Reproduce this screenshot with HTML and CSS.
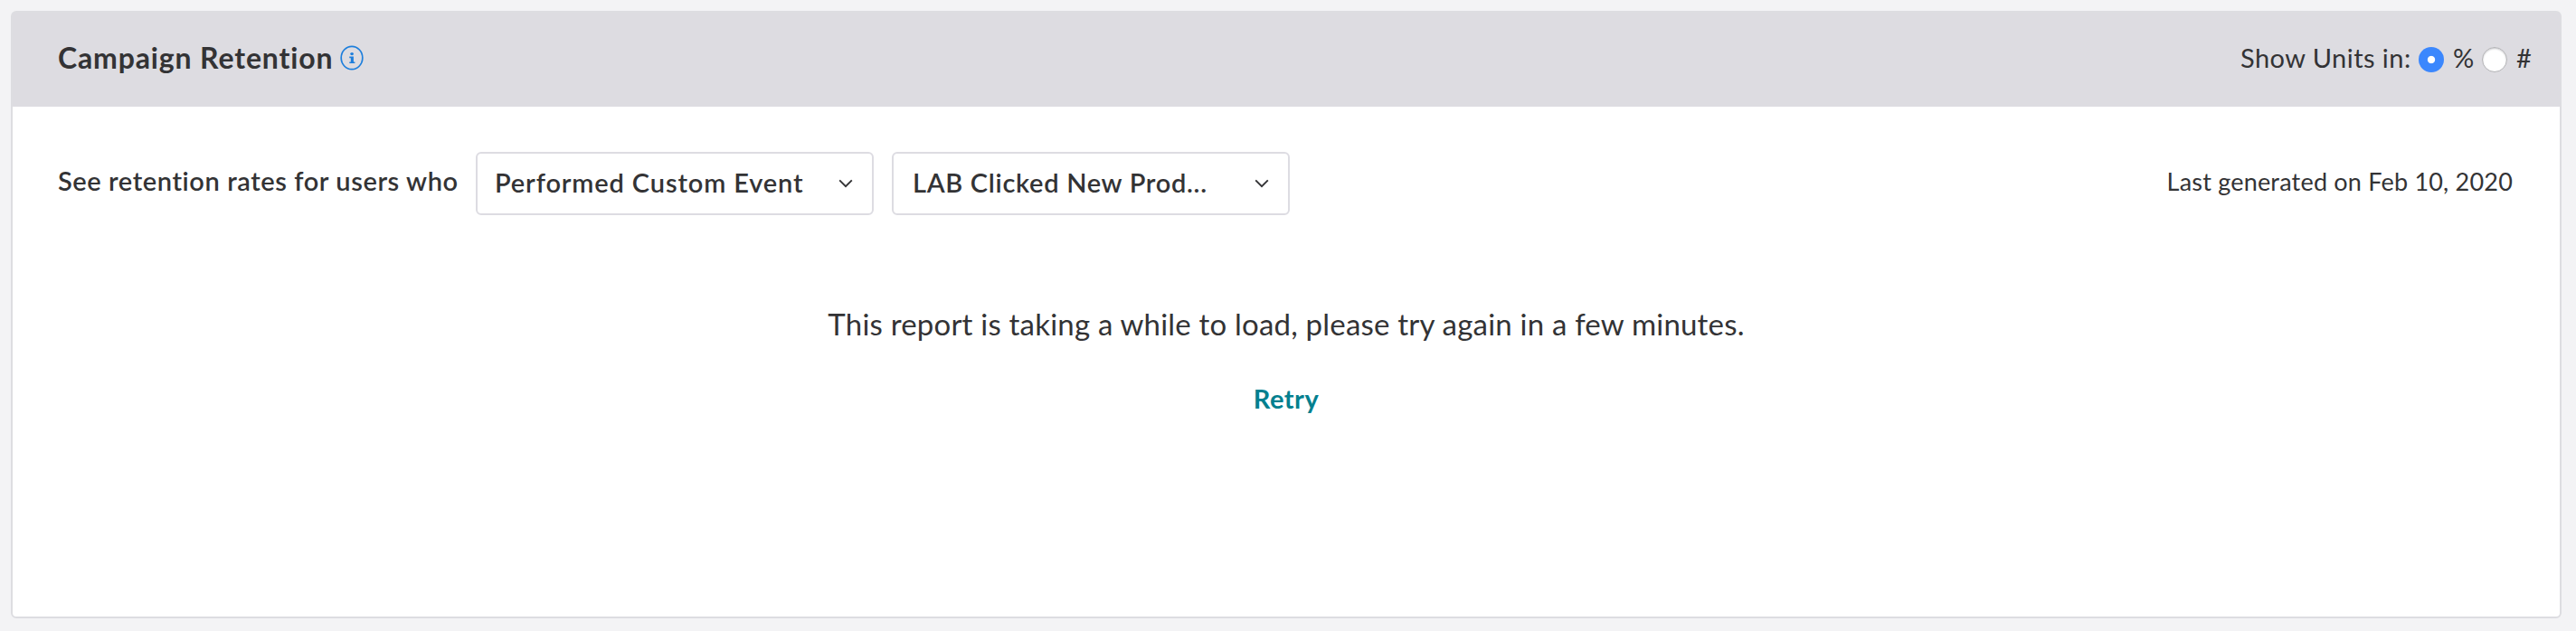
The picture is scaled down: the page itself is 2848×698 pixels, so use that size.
FILE: index.html
```html
<!DOCTYPE html>
<html lang="en">
<head>
<meta charset="utf-8">
<title>Campaign Retention</title>
<link rel="stylesheet" href="styles.css">
</head>
<body>
<section class="card">
  <header class="card-header">
    <h2 class="title">Campaign Retention</h2>
    <svg class="info" viewBox="0 0 26 28"><ellipse cx="13" cy="14" rx="11.8" ry="12.7" fill="none" stroke="#1e7fdc" stroke-width="1.7"/><ellipse cx="13.1" cy="9.6" rx="1.9" ry="1.6" fill="#1e7fdc"/><path d="M10.3 12.6h4.6v5.8h1.5v1.6h-6.1v-1.6h1.5v-4.2h-1.5z" fill="#1e7fdc"/></svg>
    <div class="units">
      <span class="units-label">Show Units in:</span>
      <span class="radio radio-on"></span>
      <span class="percent">%</span>
      <span class="radio"></span>
      <span class="hash">#</span>
    </div>
  </header>
  <div class="filters">
    <span class="lead">See retention rates for users who</span>
    <div class="select">
      <span class="select-text event-type">Performed Custom Event</span>
      <svg class="chevron" viewBox="0 0 16 10"><path d="M1.2 1.3 8 8.2l6.8-6.9" fill="none" stroke="#333335" stroke-width="1.9"/></svg>
    </div>
    <div class="select select-wide">
      <span class="select-text event-name">LAB Clicked New Prod...</span>
      <svg class="chevron" viewBox="0 0 16 10"><path d="M1.2 1.3 8 8.2l6.8-6.9" fill="none" stroke="#333335" stroke-width="1.9"/></svg>
    </div>
    <span class="generated">Last generated on Feb 10, 2020</span>
  </div>
  <div class="message">
    <p class="message-text">This report is taking a while to load, please try again in a few minutes.</p>
    <a class="retry">Retry</a>
  </div>
</section>
</body>
</html>
```
FILE: styles.css
```css
* { box-sizing: border-box; }
body {
  margin: 0;
  height: 698px;
  padding: 12px 16px 14px 12px;
  background: #f3f3f5;
  color: #333335;
  font-family: Lato, "Liberation Sans", sans-serif;
  white-space: nowrap;
  overflow: hidden;
}
.card {
  height: 672px;
  border: 2px solid #dddde1;
  border-radius: 6px;
  background: #fff;
}
.card-header {
  height: 104px;
  padding: 0 30px 0 50px;
  display: flex;
  align-items: center;
  background: #dddce1;
}
.title {
  margin: -4px 0 0;
  width: 305px;
  font-size: 32px;
  line-height: 40px;
  font-weight: 700;
  letter-spacing: 0.85px;
}
.info { width: 26px; height: 28px; margin: -4px 0 0 7px; }
.units {
  margin-left: auto;
  display: flex;
  align-items: center;
  font-size: 29px;
  line-height: 36px;
}
.units-label { width: 197px; letter-spacing: 0.45px; margin-top: -4px; }
.radio {
  width: 28px;
  height: 28px;
  border: 1px solid #b3b3b6;
  border-radius: 50%;
  background: #fff;
  box-shadow: inset 0 1px 2px #c8c8cb;
}
.radio-on {
  border: 0;
  background: radial-gradient(circle, #fff 3.7px, #3b87fd 4.6px);
  box-shadow: none;
}
.percent { width: 42px; padding-left: 10px; margin-top: -4px; }
.hash { width: 28px; padding-left: 10px; margin-top: -4px; }
.filters {
  height: 70px;
  margin-top: 50px;
  padding: 0 52px 0 50px;
  display: flex;
  align-items: center;
}
.lead {
  width: 462px;
  margin-top: -7px;
  font-size: 29px;
  line-height: 40px;
  font-weight: 600;
  letter-spacing: 0.58px;
}
.select {
  width: 440px;
  height: 70px;
  margin-right: 20px;
  padding: 0 21px 0 19px;
  border: 2px solid #dddce2;
  border-radius: 6px;
  display: flex;
  align-items: center;
  justify-content: space-between;
  font-size: 29px;
  line-height: 40px;
  font-weight: 600;
  letter-spacing: 0.86px;
}
.select-wide { padding-left: 21px; letter-spacing: 0.7px; }
.select-text { margin-top: -3px; }
.chevron { width: 16px; height: 10px; }
.generated {
  margin-left: auto;
  margin-top: -5px;
  font-size: 27px;
  line-height: 40px;
  letter-spacing: 0.2px;
}
.message {
  margin-top: 95px;
  display: flex;
  flex-direction: column;
  align-items: center;
}
.message-text { margin: 0; font-size: 33px; line-height: 50px; letter-spacing: 0.2px; }
.retry {
  margin-top: 38px;
  font-size: 29px;
  line-height: 40px;
  font-weight: 700;
  letter-spacing: 0.5px;
  color: #03808f;
}
```
